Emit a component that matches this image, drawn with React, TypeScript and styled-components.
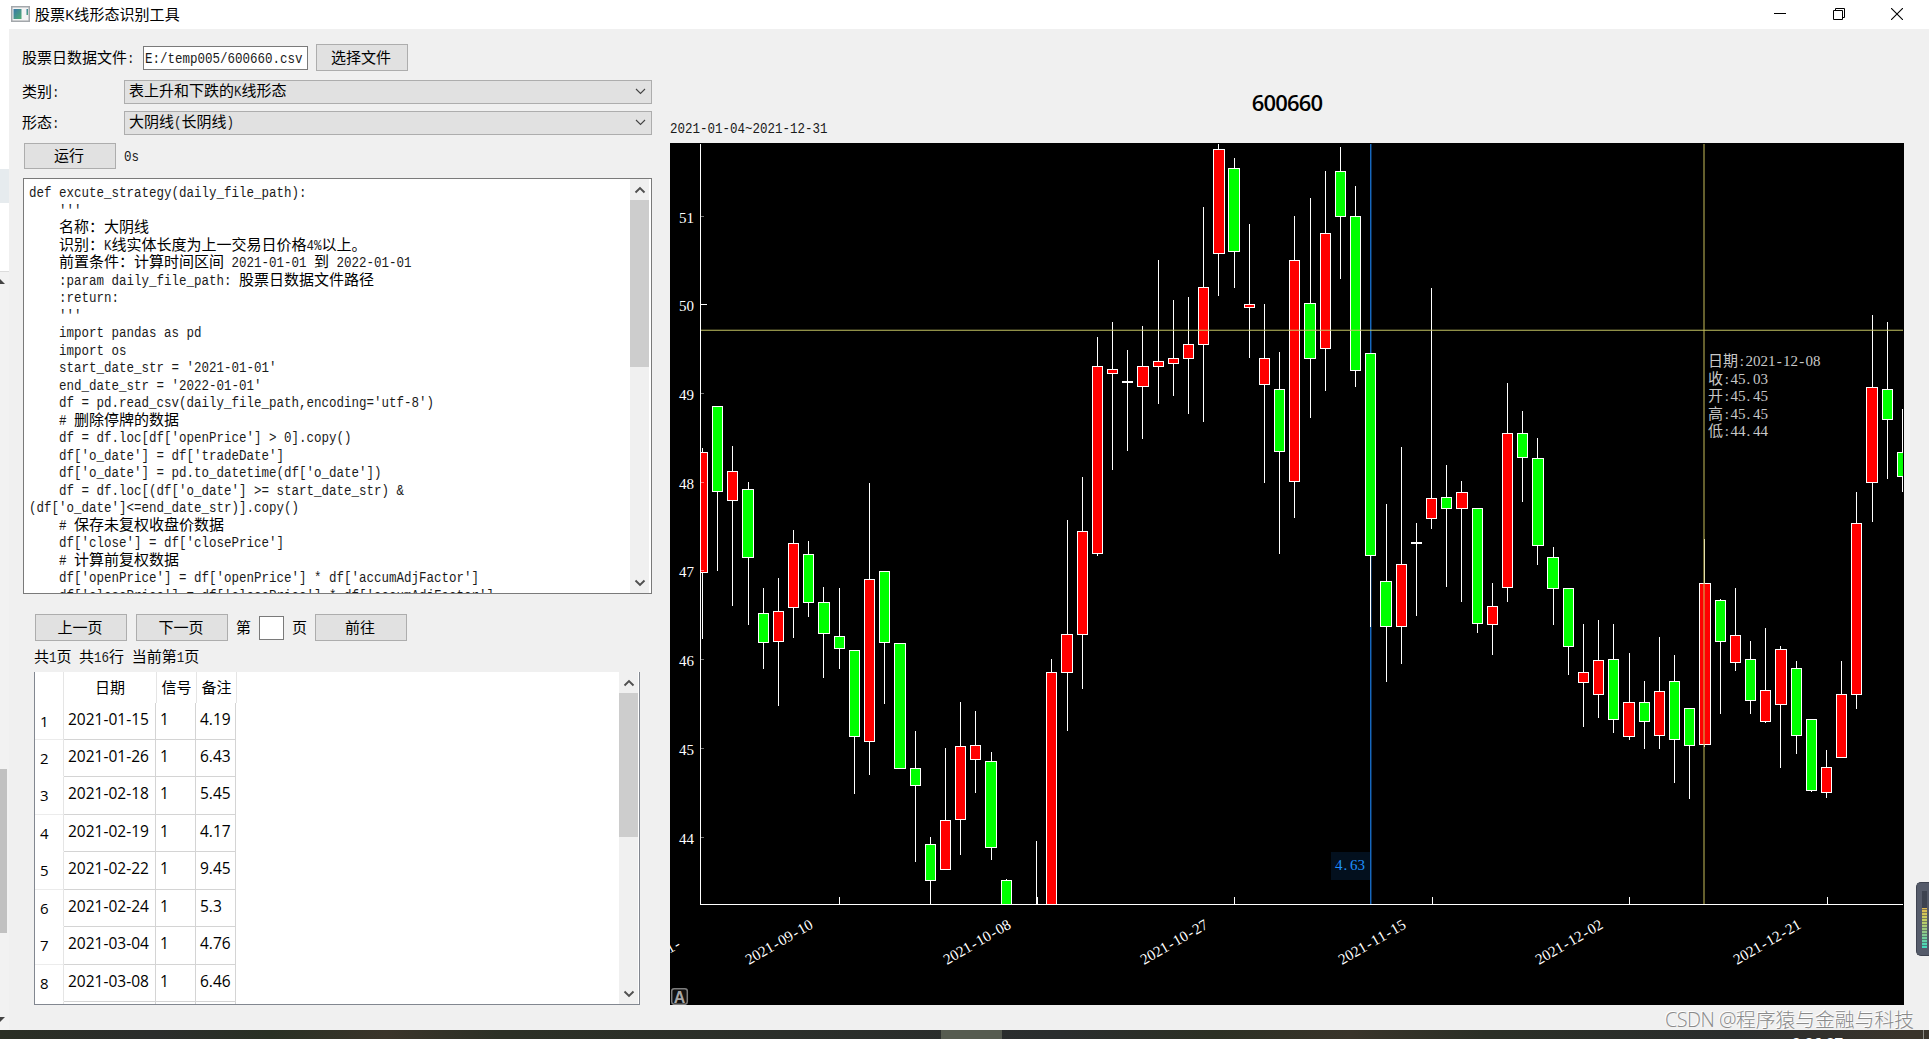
import React from 'react';
import styled, { createGlobalStyle, css } from 'styled-components';

type Candle = [high: number, top: number, bottom: number, low: number, color: 'r' | 'g' | 'w'];

const FIRST_X = 702.45;
const STEP = 15.19;
const AXIS_Y = 904;

// one entry per trading day, null when the day is under the visible range
const candles: (Candle | null)[] = [
  [448, 452, 573, 639, 'r'], [406, 406, 492, 571, 'g'], [446, 471, 501, 606, 'r'], [482, 489, 558, 625, 'g'],
  [588, 613, 643, 669, 'g'], [578, 611, 642, 706, 'r'], [530, 543, 608, 638, 'r'], [541, 554, 603, 617, 'g'],
  [587, 602, 634, 678, 'g'], [588, 636, 649, 669, 'g'], [650, 650, 737, 794, 'g'], [483, 579, 742, 775, 'r'],
  [571, 571, 643, 704, 'g'], [643, 643, 769, 769, 'g'], [731, 768, 786, 862, 'g'], [837, 844, 881, 910, 'g'],
  [748, 820, 870, 870, 'r'], [702, 746, 820, 855, 'r'], [711, 745, 760, 793, 'r'], [752, 761, 848, 860, 'g'],
  [879, 880, 920, 920, 'g'], null, [841, 910, 920, 920, 'r'], [659, 672, 920, 920, 'r'],
  [520, 634, 673, 731, 'r'], [477, 531, 635, 689, 'r'], [337, 366, 554, 556, 'r'], [322, 369, 374, 470, 'r'],
  [350, 381, 383, 451, 'w'], [326, 366, 387, 439, 'r'], [260, 361, 367, 404, 'r'], [300, 358, 364, 396, 'r'],
  [297, 344, 359, 414, 'r'], [207, 287, 345, 422, 'r'], [144, 149, 254, 296, 'r'], [158, 168, 252, 288, 'g'],
  [224, 304, 308, 358, 'r'], [304, 358, 385, 483, 'r'], [352, 389, 452, 554, 'g'], [216, 260, 482, 518, 'r'],
  [198, 303, 359, 418, 'g'], [171, 233, 349, 391, 'r'], [147, 171, 217, 279, 'g'], [186, 216, 371, 387, 'g'],
  [353, 353, 556, 627, 'g'], [504, 581, 627, 682, 'g'], [447, 564, 627, 664, 'r'], [523, 542, 544, 616, 'w'],
  [288, 498, 519, 529, 'r'], [465, 497, 509, 587, 'g'], [481, 492, 509, 602, 'r'], [508, 508, 624, 633, 'g'],
  [583, 606, 625, 655, 'r'], [383, 433, 588, 602, 'r'], [411, 433, 458, 502, 'g'], [438, 458, 546, 565, 'g'],
  [547, 557, 589, 625, 'g'], [588, 588, 647, 675, 'g'], [624, 672, 683, 727, 'r'], [620, 660, 695, 718, 'r'],
  [624, 659, 720, 733, 'g'], [653, 702, 737, 740, 'r'], [681, 702, 722, 749, 'g'], [637, 691, 736, 749, 'r'],
  [655, 681, 740, 783, 'g'], [708, 708, 746, 799, 'g'], [539, 583, 745, 747, 'r'], [599, 600, 642, 714, 'g'],
  [588, 635, 663, 671, 'r'], [641, 659, 701, 714, 'g'], [628, 690, 722, 723, 'r'], [646, 649, 705, 768, 'r'],
  [661, 668, 736, 754, 'g'], [719, 719, 791, 792, 'g'], [750, 767, 793, 798, 'r'], [661, 694, 758, 758, 'r'],
  [492, 523, 695, 709, 'r'], [315, 387, 483, 522, 'r'], [322, 389, 420, 479, 'g'], [409, 452, 477, 492, 'g'],
];

const fills = { r: '#ff0000', g: '#00ff00', w: '#ffffff' };

const priceTicks = [
  { label: '51', y: 216 },
  { label: '50', y: 304 },
  { label: '49', y: 393 },
  { label: '48', y: 482 },
  { label: '47', y: 570 },
  { label: '46', y: 659 },
  { label: '45', y: 748 },
  { label: '44', y: 837 },
];

const dateTicks = [
  { label: '2021-09-10', x: 839 },
  { label: '2021-10-08', x: 1037 },
  { label: '2021-10-27', x: 1234 },
  { label: '2021-11-15', x: 1432 },
  { label: '2021-12-02', x: 1629 },
  { label: '2021-12-21', x: 1827 },
];

const tipLines = ['日期:2021-12-08', '收:45.03', '开:45.45', '高:45.45', '低:44.44'];

const codeLines = [
  'def excute_strategy(daily_file_path):',
  "    '''",
  '    名称：大阴线',
  '    识别：K线实体长度为上一交易日价格4%以上。',
  '    前置条件：计算时间区间 2021-01-01 到 2022-01-01',
  '    :param daily_file_path: 股票日数据文件路径',
  '    :return:',
  "    '''",
  '    import pandas as pd',
  '    import os',
  "    start_date_str = '2021-01-01'",
  "    end_date_str = '2022-01-01'",
  "    df = pd.read_csv(daily_file_path,encoding='utf-8')",
  '    # 删除停牌的数据',
  "    df = df.loc[df['openPrice'] > 0].copy()",
  "    df['o_date'] = df['tradeDate']",
  "    df['o_date'] = pd.to_datetime(df['o_date'])",
  "    df = df.loc[(df['o_date'] >= start_date_str) &",
  "(df['o_date']<=end_date_str)].copy()",
  '    # 保存未复权收盘价数据',
  "    df['close'] = df['closePrice']",
  '    # 计算前复权数据',
  "    df['openPrice'] = df['openPrice'] * df['accumAdjFactor']",
  "    df['closePrice'] = df['closePrice'] * df['accumAdjFactor']",
];

const rows = [
  { date: '2021-01-15', signal: '1', note: '4.19', height: 37 },
  { date: '2021-01-26', signal: '1', note: '6.43', height: 37 },
  { date: '2021-02-18', signal: '1', note: '5.45', height: 38 },
  { date: '2021-02-19', signal: '1', note: '4.17', height: 37 },
  { date: '2021-02-22', signal: '1', note: '9.45', height: 38 },
  { date: '2021-02-24', signal: '1', note: '5.3', height: 37 },
  { date: '2021-03-04', signal: '1', note: '4.76', height: 38 },
  { date: '2021-03-08', signal: '1', note: '6.46', height: 37 },
];

// half-width characters take exactly half of a full-width one
function Mixed({ children }: { children: string }) {
  const parts = children.match(/[\x20-\x7e]+|[^\x20-\x7e]+/g) || [];
  return (
    <MixedText>
      {parts.map((part, i) => (/^[\x20-\x7e]/.test(part) ? <Half key={i}>{part}</Half> : <span key={i}>{part}</span>))}
    </MixedText>
  );
}

function halfWidthXs(text: string, x: number) {
  let at = x;
  return text.split('').map((ch) => {
    const current = at;
    const wide = ch.charCodeAt(0) > 255;
    at += wide ? 15 : 7.5;
    // the serif hyphen, dot and colon are narrow, center them in the cell
    if (ch === '-') return current + 1.25;
    if (ch === ':') return current + 1.7;
    if (ch === '.') return current + 1;
    return current;
  }).join(' ');
}

function ScrollArrow({ down }: { down?: boolean }) {
  return (
    <ArrowCell>
      <svg width="12" height="8" viewBox="0 0 12 8">
        <path d={down ? 'M1.5 1.5 L6 6 L10.5 1.5' : 'M1.5 6.5 L6 2 L10.5 6.5'} fill="none" stroke="#505050" strokeWidth="1.9" />
      </svg>
    </ArrowCell>
  );
}

function ComboBox({ value }: { value: string }) {
  return (
    <Combo>
      <Mixed>{value}</Mixed>
      <svg width="11" height="7" viewBox="0 0 11 7">
        <path d="M1 1 L5.5 5.5 L10 1" fill="none" stroke="#444" strokeWidth="1.1" />
      </svg>
    </Combo>
  );
}

function CandleShape({ candle, index }: { candle: Candle; index: number }) {
  const [high, top, bottom, low, color] = candle;
  const center = FIRST_X + STEP * index;
  const frac = center - Math.floor(center);
  const wide = frac > 0.9 || frac < 0.1;
  const left = wide ? Math.round(center) - 6 : Math.floor(center) - 5;
  const width = wide ? 12 : 11;
  return (
    <g>
      <rect x={Math.floor(center)} y={high} width="1" height={low - high} fill="#fff" />
      <rect x={left} y={top} width={width} height={bottom - top} fill="#fff" />
      {color !== 'w' && (
        <rect x={left + 1} y={top + 1} width={width - 2} height={bottom - top - 2} fill={fills[color]} />
      )}
    </g>
  );
}

function KLineChart() {
  return (
    <ChartSvg width="1234" height="862" viewBox="670 143 1234 862">
      <defs>
        <clipPath id="plot">
          <rect x="701" y="144" width="1202" height={AXIS_Y - 144} />
        </clipPath>
      </defs>
      <rect x="670" y="143" width="1234" height="862" fill="#000" />
      <g clipPath="url(#plot)">
        <rect x="1370" y="144" width="1" height="760" fill="#1668bd" />
        <rect x="1371" y="144" width="1" height="760" fill="#0c2f57" />
        {candles.map((candle, i) => candle && <CandleShape key={i} candle={candle} index={i} />)}
        <rect x="701" y="329" width="1202" height="1" fill="#c8c864" opacity="0.25" />
        <rect x="701" y="330" width="1202" height="1" fill="#c8c864" opacity="0.72" />
        <rect x="1703" y="144" width="2" height="760" fill="#c8be5a" opacity="0.5" />
      </g>
      <rect x="1331" y="852" width="39" height="28" fill="#03101e" />
      <AxisText x={halfWidthXs('4.63', 1335)} y="870" $color="#1e90ff">4.63</AxisText>

      <rect x="700" y="144" width="1" height="761" fill="#fff" />
      <rect x="700" y={AXIS_Y} width="1203" height="1" fill="#fff" />
      {priceTicks.map((tick) => (
        <g key={tick.label}>
          <rect
            x="701"
            y={tick.y}
            width={tick.label === '50' ? 6 : 3}
            height="1"
            fill="#fff"
            opacity={tick.label === '50' ? 1 : 0.45}
          />
          <AxisText x={halfWidthXs(tick.label, 679)} y={tick.y + 6.6}>{tick.label}</AxisText>
        </g>
      ))}
      <AxisText x={halfWidthXs('2021-', 0)} y="0" transform="translate(650 965) rotate(-30)">2021-</AxisText>
      {dateTicks.map((tick) => (
        <g key={tick.label}>
          <rect x={tick.x} y="897" width="1" height="7" fill="#fff" />
          <AxisText
            x={halfWidthXs(tick.label, 0)}
            y="0"
            transform={`translate(${tick.x - 90} 965) rotate(-30)`}
          >
            {tick.label}
          </AxisText>
        </g>
      ))}

      {tipLines.map((line, i) => (
        <AxisText key={line} x={halfWidthXs(line, 1708)} y={366 + i * 17.5} $color="#c8c8c8">{line}</AxisText>
      ))}

      <rect x="671.7" y="988.7" width="15.6" height="15.6" rx="2.5" fill="#111" stroke="#7d7d7d" strokeWidth="1.5" />
      <BadgeText x="679.5" y="1002.5">A</BadgeText>
    </ChartSvg>
  );
}

function App() {
  return (
    <>
      <GlobalStyle />
      <Screen>
        <TitleBar>
          <AppIcon width="19" height="16" viewBox="0 0 19 16">
            <defs>
              <linearGradient id="pane" x1="0" y1="0" x2="1" y2="1">
                <stop offset="0" stopColor="#3b78a8" />
                <stop offset="1" stopColor="#4fae72" />
              </linearGradient>
            </defs>
            <rect x="0.75" y="0.75" width="17.5" height="14.5" fill="#f4f4f4" stroke="#a3a7ab" strokeWidth="1.5" />
            <rect x="2.5" y="3" width="8" height="10" fill="url(#pane)" />
            <rect x="15.5" y="3" width="1.5" height="6" fill="url(#pane)" />
          </AppIcon>
          <WindowTitle>股票K线形态识别工具</WindowTitle>
          <WindowButtons>
            <svg width="12" height="12" viewBox="0 0 12 12"><path d="M0 5.5 H12" stroke="#000" /></svg>
            <svg width="12" height="12" viewBox="0 0 12 12">
              <path d="M0.5 2.5 H9.5 V11.5 H0.5 Z M2.5 2.5 V0.5 H11.5 V9.5 H9.5" fill="none" stroke="#000" />
            </svg>
            <svg width="12" height="12" viewBox="0 0 12 12"><path d="M0 0 L12 12 M12 0 L0 12" stroke="#000" strokeWidth="1.1" /></svg>
          </WindowButtons>
        </TitleBar>

        <Desk>
          <BackWindow>
            <BackWhite />
            <BackSelected />
            <BackWhite $tall />
            <BackGrey>
              <svg width="5" height="5"><path d="M0 0 L5 5 H0 Z" fill="#444" /></svg>
              <BackThumb />
              <svg width="5" height="5"><path d="M0 0 H5 L0 5 Z" fill="#444" /></svg>
            </BackGrey>
          </BackWindow>

          <LeftPane>
            <FileRow>
              <Mixed>股票日数据文件:</Mixed>
              <PathInput><Mixed>E:/temp005/600660.csv</Mixed></PathInput>
              <Button $height={27}>选择文件</Button>
            </FileRow>
            <FormRow $height={25}>
              <FormLabel><Mixed>类别:</Mixed></FormLabel>
              <ComboBox value="表上升和下跌的K线形态" />
            </FormRow>
            <FormRow $height={25} $gap={6}>
              <FormLabel><Mixed>形态:</Mixed></FormLabel>
              <ComboBox value="大阴线(长阴线)" />
            </FormRow>
            <RunRow>
              <Button $height={26}>运行</Button>
              <Mixed>0s</Mixed>
            </RunRow>

            <CodeBox>
              <Code>
                {codeLines.map((line, i) => (
                  <CodeLine key={i}><Mixed>{line}</Mixed></CodeLine>
                ))}
              </Code>
              <ScrollBar>
                <ScrollArrow />
                <Thumb $height={167} />
                <Spacer />
                <ScrollArrow down />
              </ScrollBar>
            </CodeBox>

            <Pager>
              <Button $height={27}>上一页</Button>
              <Button $height={27}>下一页</Button>
              <span>第</span>
              <PageInput />
              <span>页</span>
              <Button $height={27}>前往</Button>
            </Pager>
            <Status><Mixed>共1页 共16行 当前第1页</Mixed></Status>

            <TableBox>
              <Table>
                <HeadRow>
                  <HeadCell />
                  <HeadCell>日期</HeadCell>
                  <HeadCell>信号</HeadCell>
                  <HeadCell>备注</HeadCell>
                </HeadRow>
                {rows.map((row, i) => (
                  <BodyRow key={row.date} $height={row.height}>
                    <RowNumber $line={i % 2 === 0}>{i + 1}</RowNumber>
                    <Cell>{row.date}</Cell>
                    <Cell>{row.signal}</Cell>
                    <Cell>{row.note}</Cell>
                  </BodyRow>
                ))}
                <BodyRow $height={2}>
                  <RowNumber />
                  <Cell />
                  <Cell />
                  <Cell />
                </BodyRow>
              </Table>
              <ScrollBar>
                <ScrollArrow />
                <Thumb $height={144} />
                <Spacer />
                <ScrollArrow down />
              </ScrollBar>
            </TableBox>
          </LeftPane>

          <RightPane>
            <ChartTitle>600660</ChartTitle>
            <DateRange><Mixed>2021-01-04~2021-12-31</Mixed></DateRange>
            <KLineChart />
          </RightPane>
        </Desk>

        <Taskbar>
          <TaskItem />
          <ClockText>9:06:07</ClockText>
          <ShowDesktop />
        </Taskbar>

        <Watermark><span>CSDN @</span>程序猿与金融与科技</Watermark>
        <VolumeWidget>
          <Meter />
        </VolumeWidget>
      </Screen>
    </>
  );
}

const cjk = `'Noto Sans CJK SC', sans-serif`;

const GlobalStyle = createGlobalStyle`
  * {
    box-sizing: border-box;
  }

  body {
    margin: 0;
    overflow: hidden;
    background: #f0f0f0;
  }
`;

const Screen = styled.div`
  position: relative;
  display: flex;
  flex-direction: column;
  width: 1929px;
  height: 1039px;
  overflow: hidden;
  color: #000;
  font-family: ${cjk};
  font-size: 15px;
`;

const TitleBar = styled.header`
  display: flex;
  align-items: center;
  height: 29px;
  flex: none;
  padding: 0 26px 1px 11px;
  background: #fff;
`;

const AppIcon = styled.svg`
  flex: none;
`;

const WindowTitle = styled.span`
  margin-left: 5px;
  font-family: 'Open Sans', ${cjk};
  letter-spacing: 0.05px;
  line-height: 28px;
`;

const WindowButtons = styled.div`
  display: flex;
  gap: 46.5px;
  margin-left: auto;
`;

const Desk = styled.div`
  display: flex;
  height: 1001px;
  flex: none;
  background: #f0f0f0;
`;

const BackWindow = styled.div`
  display: flex;
  flex-direction: column;
  width: 9px;
  flex: none;
  background: #f2f2f2;
`;

const BackWhite = styled.div<{ $tall?: boolean }>`
  height: ${(p) => (p.$tall ? 69 : 140)}px;
  background: #fff;
  ${(p) => p.$tall && css`border-bottom: 1px solid #dcdcdc;`}
`;

const BackSelected = styled.div`
  height: 34px;
  background: #e6ebee;
`;

const BackGrey = styled.div`
  display: flex;
  flex: 1;
  flex-direction: column;
  justify-content: space-between;
  padding: 7px 0 8px;
`;

const BackThumb = styled.div`
  width: 7px;
  height: 164px;
  margin-top: 401px;
  background: #c1c1c1;
`;

const LeftPane = styled.div`
  display: flex;
  flex-direction: column;
  width: 661px;
  flex: none;
  padding: 15px 18px 0 14px;
`;

const MixedText = styled.span`
  white-space: pre;
`;

const Half = styled.span`
  display: inline-block;
  color: #1a1a1a;
  font-family: 'Liberation Mono', monospace;
  font-size: 12.5px;
  line-height: 1;
  transform: scaleY(1.16);
`;

const Button = styled.button<{ $height: number }>`
  width: 92px;
  height: ${(p) => p.$height}px;
  flex: none;
  padding: 0 2px 2px 0;
  border: 1px solid #adadad;
  background: #e1e1e1;
  color: #000;
  font: inherit;
  line-height: 20px;
`;

const FileRow = styled.div`
  display: flex;
  align-items: center;
  height: 27px;

  > ${MixedText} {
    margin: 0 1px 2px -1px;
  }

  ${Button} {
    margin-left: 8px;
  }
`;

const PathInput = styled.div`
  display: flex;
  align-items: center;
  width: 165px;
  height: 24px;
  margin-left: 7.5px;
  padding: 0 0 2px 1px;
  border: 1px solid #7a7a7a;
  background: #fff;
`;

const FormRow = styled.div<{ $height: number; $gap?: number }>`
  display: flex;
  align-items: center;
  height: ${(p) => p.$height}px;
  margin-top: ${(p) => p.$gap ?? 8}px;
`;

const FormLabel = styled.span`
  width: 102px;
  margin: 0 0 3px -1px;
`;

const Combo = styled.div`
  display: flex;
  align-items: center;
  justify-content: space-between;
  width: 528px;
  height: 24px;
  padding: 0 5px 0 4px;
  border: 1px solid #adadad;
  background: #e1e1e1;
  line-height: 20px;

  ${MixedText} {
    margin-bottom: 3px;
  }
`;

const RunRow = styled.div`
  display: flex;
  align-items: center;
  gap: 8px;
  margin: 8px 0 9px 1px;

  > ${MixedText} {
    margin-bottom: 3px;
  }
`;

const CodeBox = styled.div`
  display: flex;
  height: 416px;
  flex: none;
  padding-right: 2px;
  border: 1px solid #7a7a7a;
  background: #fff;
`;

const Code = styled.div`
  flex: 1;
  overflow: hidden;
  padding: 3px 0 0 5px;
`;

const CodeLine = styled.div`
  height: 17.5px;
  line-height: 17.5px;
`;

const ScrollBar = styled.div`
  display: flex;
  flex-direction: column;
  width: 19px;
  background: #f0f0f0;
`;

const ArrowCell = styled.div`
  display: flex;
  align-items: center;
  justify-content: center;
  height: 21px;
  flex: none;
`;

const Thumb = styled.div<{ $height: number }>`
  height: ${(p) => p.$height}px;
  background: #cdcdcd;
`;

const Spacer = styled.div`
  flex: 1;
`;

const Pager = styled.div`
  display: flex;
  align-items: center;
  gap: 8px;
  margin: 20px 0 0 12px;

  ${Button} + ${Button} {
    margin-left: 1px;
  }

  span {
    margin-bottom: 2px;
  }
`;

const PageInput = styled.div`
  width: 25px;
  height: 24px;
  border: 1px solid #7a7a7a;
  background: #fff;
`;

const Status = styled.div`
  height: 31px;
  margin-left: 11px;
  line-height: 29px;
`;

const TableBox = styled.div`
  display: flex;
  justify-content: space-between;
  width: 606px;
  height: 333px;
  margin-left: 11px;
  padding-right: 1px;
  border: 1px solid #828790;
  border-top: none;
  background: #fff;
  font-family: 'Open Sans', ${cjk};
`;

const Table = styled.div`
  overflow: hidden;
`;

const HeadRow = styled.div`
  display: grid;
  grid-template-columns: 29px 93px 40px 40px;
  height: 31px;
`;

const HeadCell = styled.div`
  border-right: 1px solid #e5e5e5;
  line-height: 31px;
  text-align: center;
`;

const BodyRow = styled.div<{ $height: number }>`
  display: grid;
  grid-template-columns: 29px 92px 40px 40px;
  height: ${(p) => p.$height}px;
`;

const RowNumber = styled.div<{ $line?: boolean }>`
  padding: 2px 0 0 5px;
  border-right: 1px solid #e5e5e5;
  border-bottom: 1px solid ${(p) => (p.$line ? '#ececec' : '#fff')};
  overflow: hidden;
  line-height: 33px;
`;

const Cell = styled.div`
  padding-left: 4px;
  border-right: 1px solid #d4d4d4;
  border-bottom: 1px solid #d4d4d4;
  overflow: hidden;
  font-size: 15.5px;
  line-height: 33px;
`;

const RightPane = styled.div`
  display: flex;
  flex-direction: column;
  width: 1234px;
`;

const ChartTitle = styled.h1`
  margin: 57px 0 0;
  font-family: 'Open Sans', sans-serif;
  font-size: 22px;
  font-weight: 600;
  letter-spacing: -0.85px;
  line-height: 32px;
  text-align: center;
`;

const DateRange = styled.div`
  height: 25px;
  line-height: 18px;
`;

const ChartSvg = styled.svg`
  display: block;
  flex: none;
`;

const AxisText = styled.text<{ $color?: string }>`
  fill: ${(p) => p.$color || '#fff'};
  font-family: 'Liberation Serif', ${cjk};
  font-size: 15px;
`;

const BadgeText = styled.text`
  fill: #a8a8a8;
  font-family: 'Liberation Sans', sans-serif;
  font-size: 16px;
  font-weight: 700;
  text-anchor: middle;
`;

const Taskbar = styled.footer`
  display: flex;
  height: 9px;
  flex: none;
  overflow: hidden;
  background: linear-gradient(90deg, #2a2e24 0, #2b2d2c 8%, #293024 14%, #3a342a 20%, #2c3026 26%, #2a2d2e 55%, #2c3024 63%, #39342a 70%, #2b2f26 77%, #2a2d2d 90%, #3a342b 99%);
`;

const TaskItem = styled.div`
  width: 61px;
  margin-left: 941px;
  background: #565b50;
`;

const ClockText = styled.span`
  margin-left: 790px;
  color: #fff;
  font-family: 'Open Sans', sans-serif;
  font-size: 15px;
  font-weight: 600;
  line-height: 24px;
`;

const ShowDesktop = styled.div`
  width: 6px;
  margin-left: auto;
  border-left: 1px solid #8b8a84;
`;

const Watermark = styled.div`
  position: absolute;
  right: 15px;
  bottom: 5px;
  color: #8a8a8a;
  font-family: 'Open Sans', ${cjk};
  font-size: 19.8px;
  font-weight: 300;
  line-height: 28px;
  text-shadow: -1px -1px 0 #fff;
  white-space: nowrap;

  span {
    letter-spacing: -0.5px;
  }
`;

const VolumeWidget = styled.div`
  position: absolute;
  top: 882px;
  right: 0;
  display: flex;
  align-items: center;
  width: 13px;
  height: 74px;
  padding-left: 5px;
  border: 1px solid #3e4350;
  border-right: none;
  border-radius: 5px 0 0 5px;
  background: #555b6a;
`;

const Meter = styled.div`
  width: 5px;
  height: 57px;
  background:
    repeating-linear-gradient(180deg, rgba(60, 66, 80, 0.55) 0 1px, transparent 1px 3px),
    linear-gradient(180deg, #3d4350 0 17px, #e0b850 17px, #c8d060 28px, #8cc88c 42px, #40dcc0);
`;

export default App;
